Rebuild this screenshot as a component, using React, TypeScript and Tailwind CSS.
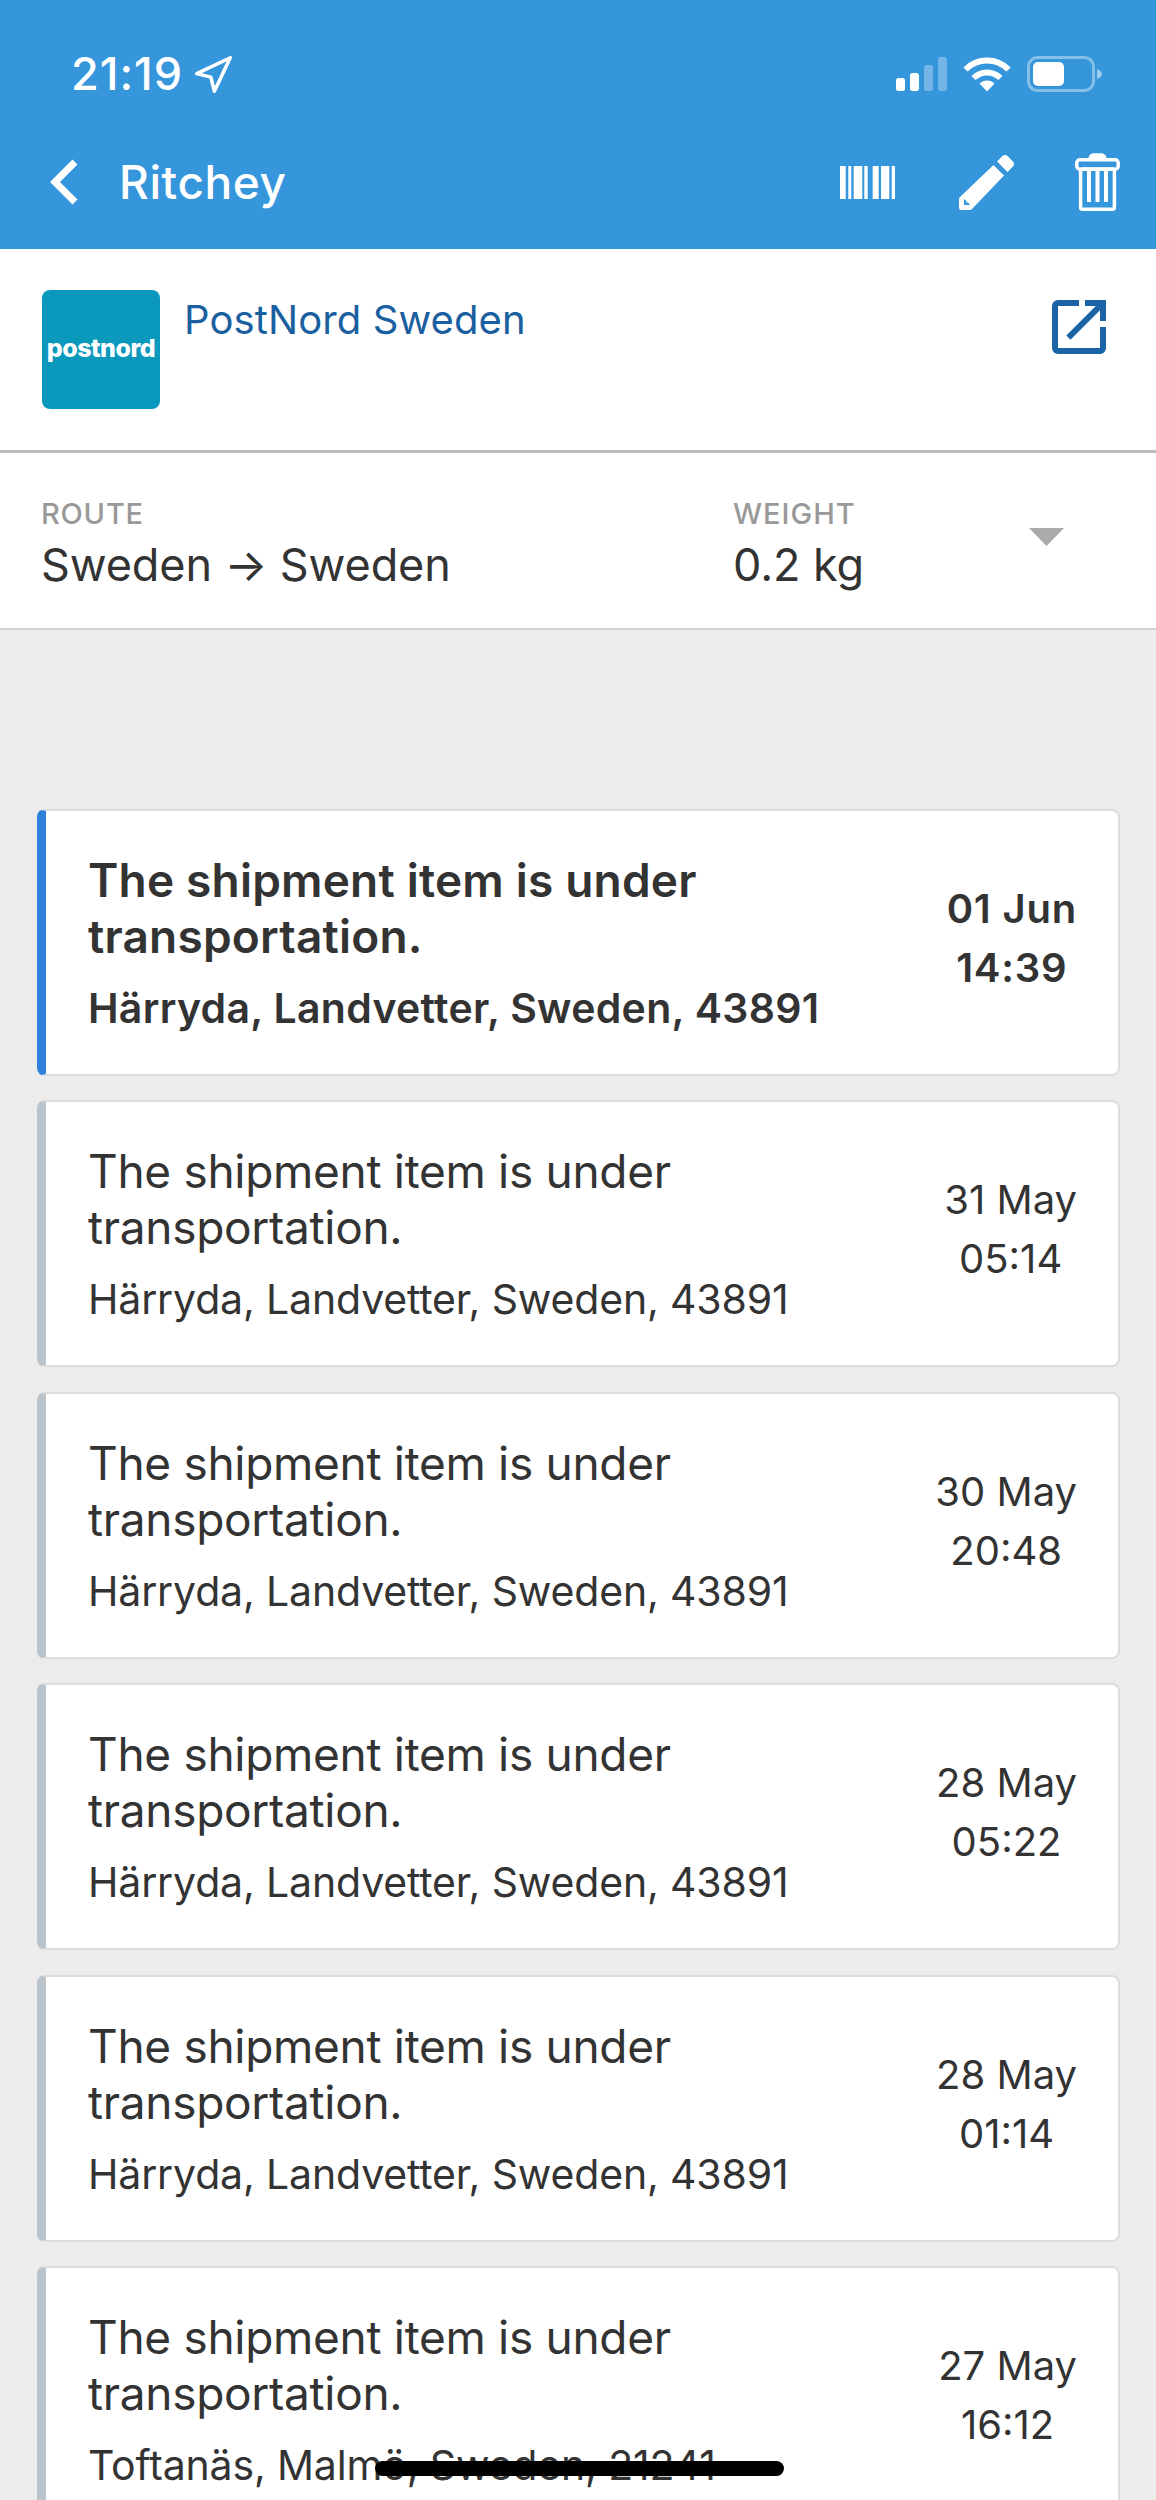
import React from "react";
import { MdOpenInNew } from "react-icons/md";

const events = [
  { place: "Härryda, Landvetter, Sweden, 43891", day: "01 Jun", time: "14:39", latest: true },
  { place: "Härryda, Landvetter, Sweden, 43891", day: "31 May", time: "05:14" },
  { place: "Härryda, Landvetter, Sweden, 43891", day: "30 May", time: "20:48" },
  { place: "Härryda, Landvetter, Sweden, 43891", day: "28 May", time: "05:22" },
  { place: "Härryda, Landvetter, Sweden, 43891", day: "28 May", time: "01:14" },
  { place: "Toftanäs, Malmö, Sweden, 21241", day: "27 May", time: "16:12" },
];

function StatusIcons() {
  return (
    <div className="flex items-center">
      <svg width="51" height="34" viewBox="0 0 51 34" fill="#fff">
        <rect x="0" y="21" width="9" height="13" rx="2.5" />
        <rect x="14" y="16" width="9" height="18" rx="2.5" />
        <rect x="28" y="8" width="9" height="26" rx="2.5" opacity="0.3" />
        <rect x="42" y="0" width="9" height="34" rx="2.5" opacity="0.3" />
      </svg>
      <svg className="ml-[16px]" width="48" height="36" viewBox="0 0 48 36" fill="none" stroke="#fff" strokeWidth="6">
        <path d="M2.5 13.5 C14.5 1.5 33.5 1.5 45.5 13.5" />
        <path d="M10.5 22 C18 14.5 30 14.5 37.5 22" />
        <path d="M16.5 27.5 C20.5 23.5 27.5 23.5 31.5 27.5 L24 35.5 Z" fill="#fff" stroke="none" />
      </svg>
      <svg className="ml-[16px]" width="75" height="36" viewBox="0 0 75 36" fill="none">
        <rect x="1.5" y="1.5" width="65" height="33" rx="9" stroke="#fff" strokeOpacity="0.4" strokeWidth="3" />
        <rect x="6" y="6" width="31" height="24" rx="5" fill="#fff" />
        <path d="M70 13 C73 14 75 16 75 18 C75 20 73 22 70 23 Z" fill="#fff" fillOpacity="0.5" />
      </svg>
    </div>
  );
}

function Barcode() {
  return (
    <svg width="55" height="33" viewBox="0 0 55 33" fill="#fff">
      <rect x="0" width="5.7" height="33" />
      <rect x="8.3" width="3" height="33" />
      <rect x="13.7" width="8.6" height="33" />
      <rect x="24.3" width="3.4" height="33" />
      <rect x="32.7" width="6" height="33" />
      <rect x="41" width="8.3" height="33" />
      <rect x="51.7" width="3.3" height="33" />
    </svg>
  );
}

function Pencil() {
  return (
    <svg width="56" height="56" viewBox="0 0 56 56" fill="#fff">
      <path d="M38 7.5 L43.5 2 Q46 0 48.5 2 L54 7.5 Q56 10 54 12.5 L48.5 18 Z" />
      <path
        fillRule="evenodd"
        d="M34.5 11 L45 21.5 L13 55 Q12 56 11 56 H2 Q0 56 0 54 V45 Q0 44 1 43 Z M5 45 V51 H11 L9 48.5 H7.5 V47 Z"
      />
    </svg>
  );
}

function Trash() {
  return (
    <svg width="45" height="58" viewBox="0 0 45 58" fill="none" stroke="#fff" strokeWidth="3.5">
      <path d="M14 6 Q14.5 1.8 18 1 H27 Q30.5 1.8 31 6" fill="#fff" strokeWidth="1.5" />
      <rect x="1.8" y="6.8" width="41.4" height="9.4" rx="3" />
      <rect x="5.6" y="16" width="33.8" height="40.2" rx="2" />
      <g fill="#fff" stroke="none">
        <rect x="12" y="16" width="4" height="33" />
        <rect x="20.5" y="16" width="4" height="33" />
        <rect x="29" y="16" width="4" height="33" />
      </g>
    </svg>
  );
}

function EventCard({ place, day, time, latest }: { place: string; day: string; time: string; latest?: boolean }) {
  return (
    <article
      className={`flex h-[267px] items-center rounded-[8px] border-2 border-l-[9px] border-[#dcdcdc] bg-white pr-[41px] pl-[42px] text-[#333] ${
        latest ? "border-l-[#2f80dc] font-semibold" : "border-l-[#bcc4cb]"
      }`}
    >
      <div className="min-w-0 flex-1">
        <p className={`w-[620px] text-[46px] leading-[56px] ${latest ? "tracking-[0.2px]" : "tracking-[-0.3px]"}`}>
          The shipment item is under transportation.
        </p>
        <p className={`mt-[19px] text-[41px] leading-[50px] whitespace-nowrap ${latest ? "tracking-[0.3px]" : "tracking-[-0.15px]"}`}>
          {place}
        </p>
      </div>
      <div className={`mb-[9px] text-center text-[40px] leading-[59px] whitespace-nowrap ${latest ? "tracking-[0.8px]" : ""}`}>
        <div>{day}</div>
        <div>{time}</div>
      </div>
    </article>
  );
}

export default function App() {
  return (
    <div className="relative h-[2500px] overflow-hidden bg-[#ececec] font-['Inter',sans-serif]">
      <header className="h-[249px] bg-[#3596dc] pt-[47px] text-white">
        <div className="flex h-[54px] items-center justify-between pr-[54px] pl-[71px]">
          <div className="flex items-center">
            <span className="text-[45px] leading-[54px] font-medium tracking-[1px]">21:19</span>
            <svg className="ml-[12px]" width="37" height="37" viewBox="2 1 21 21" fill="none" stroke="#fff" strokeWidth="2" strokeLinejoin="round">
              <polygon points="3 11 22 2 13 21 11 13 3 11" />
            </svg>
          </div>
          <StatusIcons />
        </div>
        <div className="mt-[51px] flex h-[60px] items-center pr-[36px] pl-[50px]">
          <svg width="28" height="46" viewBox="0 0 28 46" fill="none" stroke="#fff" strokeWidth="7">
            <polyline points="25,3 5,23 25,43" />
          </svg>
          <span className="ml-[41px] flex-1 text-[46px] leading-[56px] font-medium tracking-[0.6px]">Ritchey</span>
          <Barcode />
          <span className="ml-[64px]"><Pencil /></span>
          <span className="ml-[60px]"><Trash /></span>
        </div>
      </header>

      <section className="flex h-[204px] border-b-[3px] border-[#bdbdbd] bg-white pt-[41px] pr-[41px] pl-[42px]">
        <div className="flex h-[119px] w-[118px] items-center justify-center rounded-[8px] bg-[#0b98bd]">
          <span className="-mt-[2px] text-[25px] leading-none font-extrabold tracking-[-0.5px] text-white">postnord</span>
        </div>
        <span className="mt-[6px] ml-[24px] flex-1 text-[40px] leading-[48px] tracking-[0.1px] text-[#1a5fa0]">PostNord Sweden</span>
        <MdOpenInNew className="mt-[1px] text-[#1a64a6]" size={72} />
      </section>

      <section className="flex h-[177px] border-b-2 border-[#d2d2d2] bg-white pt-[43px] pl-[41px]">
        <div className="w-[692px]">
          <div className="text-[29px] leading-[36px] font-medium tracking-[0.8px] text-[#999]">ROUTE</div>
          <div className="mt-[6px] text-[45px] leading-[54px] tracking-[-0.1px] text-[#333]">Sweden → Sweden</div>
        </div>
        <div className="w-[296px]">
          <div className="text-[29px] leading-[36px] font-medium tracking-[1px] text-[#999]">WEIGHT</div>
          <div className="mt-[6px] text-[45px] leading-[54px] tracking-[-0.1px] text-[#333]">0.2 kg</div>
        </div>
        <svg className="mt-[32px]" width="35" height="18" viewBox="0 0 35 18" fill="#aaa">
          <polygon points="0,0 35,0 17.5,18" />
        </svg>
      </section>

      <div className="flex flex-col gap-[24.4px] pt-[179px] pr-[36px] pl-[37px]">
        {events.map((e) => (
          <EventCard key={e.day + e.time} {...e} />
        ))}
      </div>

      <div className="absolute top-[2461px] left-[375px] h-[15px] w-[409px] rounded-full bg-black" />
    </div>
  );
}
